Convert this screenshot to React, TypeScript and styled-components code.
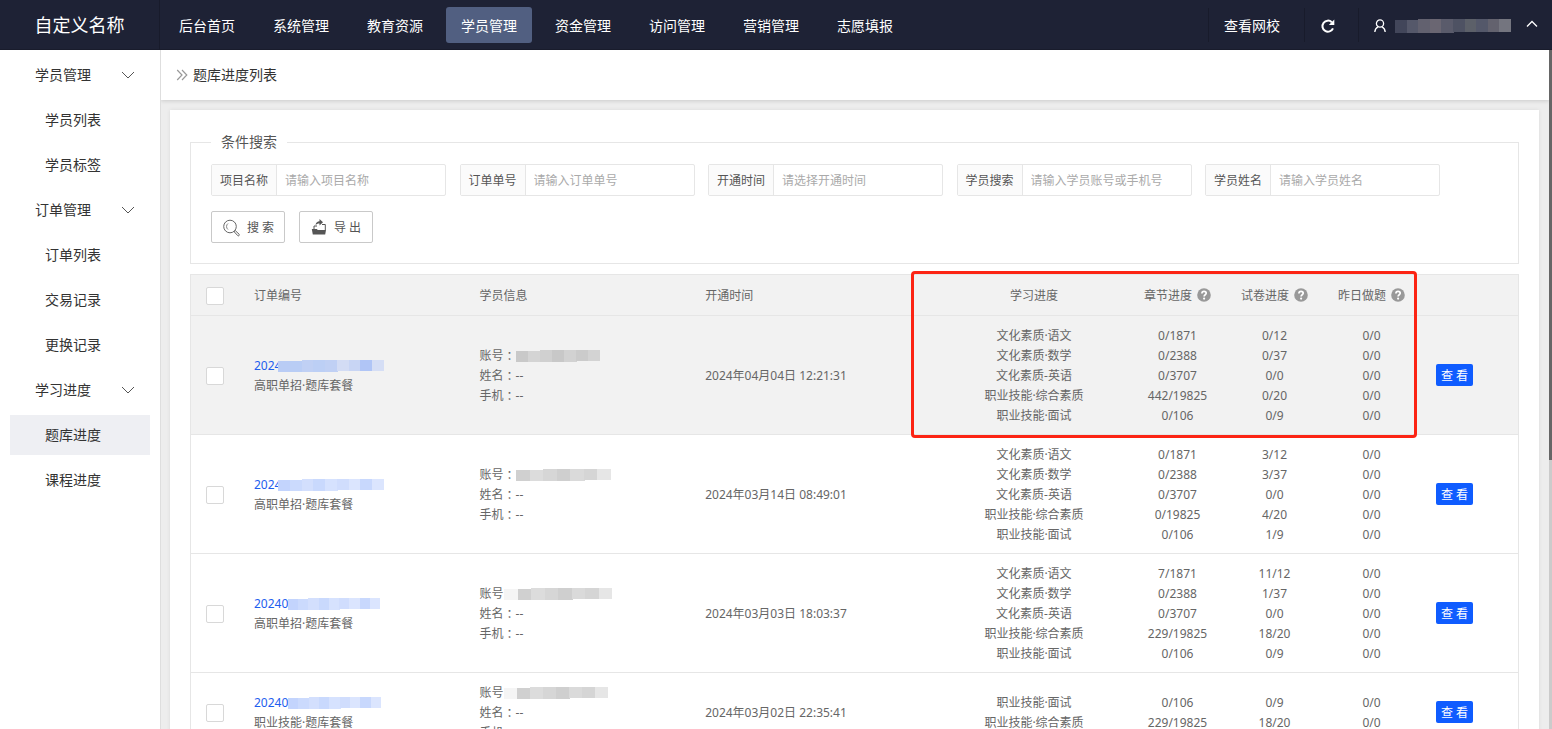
import React from "react";
import styled, { createGlobalStyle } from "styled-components";

const Global = createGlobalStyle`
  * { box-sizing: border-box; }
  html, body, #root { height: 100%; }
  body {
    margin: 0;
    background: #ededed;
    color: #333;
    font: 14px/20px "Noto Sans", "Noto Sans CJK SC", sans-serif;
  }
  a { color: inherit; text-decoration: none; }
  button, input { font: inherit; color: inherit; }
`;

const Page = styled.div`
  display: flex;
  flex-direction: column;
  height: 100vh;
  overflow: hidden;
`;

/* ---------- top bar ---------- */
const TopBar = styled.header`
  display: flex;
  flex: none;
  height: 50px;
  background: #1e2235;
  box-shadow: inset 0 -1px 0 #191c2c;
  color: #fff;
`;
const Brand = styled.a`
  width: 160px;
  flex: none;
  border-right: 1px solid #181b2b;
  font-size: 18px;
  line-height: 50px;
  text-align: center;
`;
const Nav = styled.nav`
  display: flex;
  flex: 1;
  align-items: center;
  gap: 8px;
  padding-left: 4px;
`;
const NavLink = styled.a<{ $active?: boolean }>`
  padding: 9px 15px 7px;
  border-radius: 3px;
  background: ${(p) => (p.$active ? "#515f81" : "transparent")};
`;
const Tools = styled.div`
  display: flex;
  align-items: center;
`;
const Tool = styled.button<{ $w: number }>`
  display: flex;
  align-items: center;
  gap: 9px;
  width: ${(p) => p.$w}px;
  height: 34px;
  padding: 2px 14px 0 15px;
  border: 0;
  border-left: 1px solid #181b2b;
  background: none;
  cursor: pointer;
  & > svg:nth-child(3) { margin-left: auto; }
`;

/* ---------- body ---------- */
const Body = styled.div`
  display: flex;
  flex: 1;
  min-height: 0;
`;
const Side = styled.aside`
  flex: none;
  width: 161px;
  background: #fff;
  border-right: 1px solid #dedede;
`;
const Group = styled.button`
  display: flex;
  align-items: center;
  justify-content: space-between;
  width: 100%;
  height: 50px;
  padding: 0 25px 0 35px;
  border: 0;
  background: none;
  cursor: pointer;
`;
const SubList = styled.ul`
  display: flex;
  flex-direction: column;
  gap: 5px;
  margin: 0;
  padding: 0 10px;
  list-style: none;
`;
const SubLink = styled.a<{ $active?: boolean }>`
  display: block;
  padding: 10px 35px;
  background: ${(p) => (p.$active ? "#eeeff3" : "transparent")};
`;
const Main = styled.main`
  flex: 1;
  min-width: 0;
  overflow: hidden;
`;
const Crumb = styled.div`
  display: flex;
  align-items: center;
  gap: 5px;
  height: 50px;
  padding-left: 15px;
  background: #fff;
  box-shadow: 0 1px 4px rgba(0, 0, 0, 0.15);
`;
const CrumbTitle = styled.h1`
  margin: 0;
  font-size: 14px;
  line-height: 20px;
  font-weight: 400;
`;
const Panel = styled.section`
  margin: 10px 10px 0 9px;
  padding: 20px;
  background: #fff;
  box-shadow: 0 0 4px rgba(0, 0, 0, 0.08);
`;
const Rail = styled.div`
  display: grid;
  grid-template-rows: 61fr 40fr;
  flex: none;
  width: 3px;
  background: #cbcbcb;
`;
const Thumb = styled.div`
  background: #666;
`;

/* ---------- search form ---------- */
const SearchBox = styled.fieldset`
  min-width: 0;
  margin: 0 0 10px;
  padding: 10px 20px 20px;
  border: 1px solid #e6e6e6;
`;
const Legend = styled.legend`
  padding: 0 10px;
  line-height: 24px;
  color: #555;
`;
const Fields = styled.div`
  display: flex;
  flex-wrap: wrap;
  justify-content: space-between;
  row-gap: 10px;
  max-width: 1229px;
  font-size: 12px;
  color: #555;
`;
const Field = styled.label`
  display: flex;
  width: 235px;
  height: 32px;
  border: 1px solid #e6e6e6;
  border-radius: 2px;
  line-height: 28px;
`;
const FieldName = styled.span`
  flex: none;
  width: 65px;
  padding: 2px 0 0 8px;
  background: #fbfbfb;
  border-right: 1px solid #e6e6e6;
`;
const TextBox = styled.input`
  flex: 1;
  min-width: 0;
  padding: 2px 8px 0;
  border: 0;
  outline: 0;
  background: none;
  &::placeholder { color: #aaa; opacity: 1; }
`;
const Actions = styled.div`
  display: flex;
  gap: 14px;
  margin-top: 15px;
`;
const ActionButton = styled.button`
  display: flex;
  align-items: center;
  gap: 7px;
  width: 74px;
  height: 32px;
  padding: 1px 0 0 11px;
  border: 1px solid #c9c9c9;
  border-radius: 2px;
  background: #fff;
  color: #555;
  font-size: 12px;
  white-space: pre;
  cursor: pointer;
`;

/* ---------- table ---------- */
const TableWrap = styled.div`
  position: relative;
  border: 1px solid #e6e6e6;
`;
const Table = styled.table`
  width: 100%;
  table-layout: fixed;
  border-collapse: separate;
  border-spacing: 0;
  color: #666;
  font-size: 12px;
`;
const Col = styled.col<{ $w?: string }>`
  width: ${(p) => p.$w ?? "auto"};
`;
const Th = styled.th<{ $center?: boolean }>`
  height: 41px;
  padding: 2px ${(p) => (p.$center ? "0" : "15px")} 0;
  background: #f2f2f2;
  border-bottom: 1px solid #e6e6e6;
  font-weight: 400;
  text-align: ${(p) => (p.$center ? "center" : "left")};
`;
const HeadLabel = styled.span`
  display: flex;
  align-items: center;
  justify-content: center;
  gap: 5px;
  & > svg { margin-bottom: 2px; }
`;
const Tr = styled.tr<{ $hover?: boolean }>`
  background: ${(p) => (p.$hover ? "#f2f2f2" : "#fff")};
`;
const Td = styled.td<{ $center?: boolean }>`
  padding: 10px ${(p) => (p.$center ? "0" : "15px")} 8px;
  border-bottom: 1px solid #e6e6e6;
  text-align: ${(p) => (p.$center ? "center" : "left")};
`;
const Line = styled.div`
  display: flex;
  align-items: center;
  height: 20px;
`;
const Cell = styled.div`
  height: 20px;
  white-space: nowrap;
`;
const OrderLink = styled.a`
  display: flex;
  align-items: center;
  height: 20px;
  color: #1e5eee;
`;
/* full-width colon drawn in the middle of its square */
const Colon = styled.span`
  font-family: "Noto Sans CJK TC", sans-serif;
`;
const Check = styled.input`
  appearance: none;
  display: block;
  width: 18px;
  height: 18px;
  margin: 0;
  border: 1px solid #d8d8d8;
  border-radius: 2px;
  background: #fff;
`;
const ViewButton = styled.button`
  display: block;
  height: 22px;
  margin: 0 1px 2px;
  padding: 1px 5px 0;
  border: 0;
  border-radius: 2px;
  background: #0f5cff;
  color: #fff;
  font-size: 12px;
  line-height: 20px;
  cursor: pointer;
`;
const Highlight = styled.div`
  position: absolute;
  top: -4px;
  right: 101px;
  width: 506px;
  height: 167px;
  border: 3px solid #fc2414;
  border-radius: 4px;
  pointer-events: none;
`;
const Patch = styled.svg<{ $shift?: number }>`
  flex: none;
  margin-left: ${(p) => p.$shift ?? 0}px;
  margin-bottom: 1px;
  position: relative;
`;

/* ---------- drawings ---------- */
const Mosaic = ({ cells, w, h = 12, shift = 0 }: { cells: string[]; w: number; h?: number; shift?: number }) => {
  const step = w / cells.length;
  return (
    <Patch $shift={shift} width={w} height={h} shapeRendering="crispEdges" aria-hidden="true">
      {cells.map((c, i) => (
        <rect key={i} x={i * step} y={i < 2 ? 1 : 0} width={step + 1} height={h - (i > 4 ? 1 : 0)} fill={c} />
      ))}
    </Patch>
  );
};
const Chevron = () => (
  <svg width="14" height="8" viewBox="0 0 14 8" fill="none" stroke="#555" aria-hidden="true">
    <path d="M1 1l6 6 6-6" />
  </svg>
);
const DoubleRight = () => (
  <svg width="12" height="12" viewBox="0 0 12 12" fill="none" stroke="#999" strokeWidth="1.200" aria-hidden="true">
    <path d="M1.200 1L6 6l-4.800 5M6 1l4.800 5L6 11" />
  </svg>
);
const Reload = () => (
  <svg width="16" height="16" viewBox="0 0 16 16" fill="none" aria-hidden="true">
    <path d="M13 10.300A5.500 5.500 0 1 1 11.800 4.200" stroke="#fff" strokeWidth="2" />
    <path d="M14.300 1.500v5.500H8.800z" fill="#fff" />
  </svg>
);
const User = () => (
  <svg width="12" height="14" viewBox="0 0 12 14" fill="none" stroke="#fff" strokeWidth="1.300" aria-hidden="true">
    <circle cx="6" cy="4.500" r="3.600" />
    <path d="M.8 13c.2-2.700 1.400-4.300 3.200-5.200M11.200 13c-.2-2.700-1.400-4.300-3.200-5.200" />
  </svg>
);
const Up = () => (
  <svg width="12" height="12" viewBox="0 0 12 12" fill="none" stroke="#fff" strokeWidth="1.300" aria-hidden="true">
    <path d="M1 6.500l5-5 5 5" />
  </svg>
);
const Magnifier = () => (
  <svg width="17" height="18" viewBox="0 0 17 18" fill="none" stroke="#666" aria-hidden="true">
    <circle cx="7" cy="7.500" r="6.300" />
    <path d="M5 4.500a3.800 3.800 0 0 0 0 6" strokeWidth=".8" />
    <path d="M11.200 12.800l1.200-1.100 3.800 3.600c.6 1-.6 2-1.400 1.400z" />
  </svg>
);
const Export = () => (
  <svg width="16" height="18" viewBox="0 0 16 18" aria-hidden="true">
    <path d="M.8 10h5l1 1h8.200l-.8 4.500H1.800z" fill="#555" />
    <path d="M3 10V7H6M11 5.500h3.300V11" fill="none" stroke="#555" />
    <path d="M4.500 6C5 3.300 6.500 2.200 8.500 2.200V0L12 3.300 8.500 6.500V4.400C6.800 4.300 5.500 5 4.500 6z" fill="#555" />
  </svg>
);
const Help = () => (
  <svg width="14" height="14" viewBox="0 0 14 14" fill="none" aria-hidden="true">
    <circle cx="7" cy="7" r="6.800" fill="#999" />
    <path d="M4.900 5.500c0-2.800 4.300-2.600 4.300-.2 0 1.500-2.100 1.500-2.100 3.200" stroke="#fff" strokeWidth="1.700" />
    <circle cx="7.100" cy="10.600" r="1.100" fill="#fff" />
  </svg>
);

/* ---------- data ---------- */
const NAV = ["后台首页", "系统管理", "教育资源", "学员管理", "资金管理", "访问管理", "营销管理", "志愿填报"];
const SIDE = [
  { title: "学员管理", items: ["学员列表", "学员标签"] },
  { title: "订单管理", items: ["订单列表", "交易记录", "更换记录"] },
  { title: "学习进度", items: ["题库进度", "课程进度"] },
];
const FIELDS = [
  ["项目名称", "请输入项目名称"],
  ["订单单号", "请输入订单单号"],
  ["开通时间", "请选择开通时间"],
  ["学员搜索", "请输入学员账号或手机号"],
  ["学员姓名", "请输入学员姓名"],
];
const SUBJECTS = ["文化素质·语文", "文化素质·数学", "文化素质-英语", "职业技能·综合素质", "职业技能·面试"];
const BLUES = ["#b9ccf5", "#b9cdf5", "#c0d0f4", "#bccff5", "#c0d0f4", "#d3dcf4", "#c8d5f4", "#b0c5f6", "#d5def5"];
const LIGHT_BLUES = ["#c3d4fd", "#cbdafd", "#d3dffd", "#c9d9fd", "#d6e2fe", "#d0ddfd", "#dbe5fe", "#c8d8fd", "#dbe5fe"];
const GREYS = ["#c9c9c9", "#d4d4d4", "#d0d0d0", "#c8c8c8", "#d2d2d2", "#cbcbcb", "#d3d3d3"];
const LIGHT_GREYS = ["#d0d0d0", "#dcdcdc", "#d6d6d6", "#cfcfcf", "#dadada", "#d5d5d5", "#e6e6e6"];
const FADED_GREYS = ["#f5f5f5", ...LIGHT_GREYS];
const USER_CELLS = ["#42465a", "#55586a", "#62616f", "#6a6672", "#5a5b6b", "#4e5263", "#5c6069", "#54586a", "#63626e", "#74757f"];

type Row = {
  id: string;
  idW: number;
  idShift: number;
  pkg: string;
  accountW: number;
  noColon?: boolean;
  time: string;
  subjects: string[];
  chapter: string[];
  exam: string[];
};
const ROWS: Row[] = [
  {
    id: "2024", idW: 106, idShift: -3, pkg: "高职单招·题库套餐", accountW: 84, time: "2024年04月04日 12:21:31", subjects: SUBJECTS,
    chapter: ["0/1871", "0/2388", "0/3707", "442/19825", "0/106"], exam: ["0/12", "0/37", "0/0", "0/20", "0/9"],
  },
  {
    id: "2024", idW: 106, idShift: -3, pkg: "高职单招·题库套餐", accountW: 95, time: "2024年03月14日 08:49:01", subjects: SUBJECTS,
    chapter: ["0/1871", "0/2388", "0/3707", "0/19825", "0/106"], exam: ["3/12", "3/37", "0/0", "4/20", "1/9"],
  },
  {
    id: "20240", idW: 92, idShift: 0, pkg: "高职单招·题库套餐", accountW: 108, noColon: true, time: "2024年03月03日 18:03:37", subjects: SUBJECTS,
    chapter: ["7/1871", "0/2388", "0/3707", "229/19825", "0/106"], exam: ["11/12", "1/37", "0/0", "18/20", "0/9"],
  },
  {
    id: "20240", idW: 93, idShift: 0, pkg: "职业技能·题库套餐", accountW: 104, noColon: true, time: "2024年03月02日 22:35:41", subjects: [SUBJECTS[4], SUBJECTS[3]],
    chapter: ["0/106", "229/19825"], exam: ["0/9", "18/20"],
  },
];

const Stack = ({ items }: { items: string[] }) => (
  <>
    {items.map((t, i) => (
      <Cell key={i}>{t}</Cell>
    ))}
  </>
);

export default function App() {
  return (
    <Page>
      <Global />
      <TopBar>
        <Brand href="#">自定义名称</Brand>
        <Nav>
          {NAV.map((n) => (
            <NavLink key={n} href="#" $active={n === "学员管理"}>{n}</NavLink>
          ))}
        </Nav>
        <Tools>
          <Tool $w={96}>查看网校</Tool>
          <Tool $w={54} aria-label="刷新"><Reload /></Tool>
          <Tool $w={194} aria-label="账号">
            <User />
            <Mosaic cells={USER_CELLS} w={116} h={14} />
            <Up />
          </Tool>
        </Tools>
      </TopBar>
      <Body>
        <Side>
          {SIDE.map((g) => (
            <React.Fragment key={g.title}>
              <Group>{g.title}<Chevron /></Group>
              <SubList>
                {g.items.map((s) => (
                  <li key={s}><SubLink href="#" $active={s === "题库进度"}>{s}</SubLink></li>
                ))}
              </SubList>
            </React.Fragment>
          ))}
        </Side>
        <Main>
          <Crumb>
            <DoubleRight />
            <CrumbTitle>题库进度列表</CrumbTitle>
          </Crumb>
          <Panel>
            <SearchBox>
              <Legend>条件搜索</Legend>
              <Fields>
                {FIELDS.map(([name, hint]) => (
                  <Field key={name}>
                    <FieldName>{name}</FieldName>
                    <TextBox type="text" placeholder={hint} />
                  </Field>
                ))}
              </Fields>
              <Actions>
                <ActionButton type="button"><Magnifier />搜 索</ActionButton>
                <ActionButton type="button"><Export />导 出</ActionButton>
              </Actions>
            </SearchBox>
            <TableWrap>
              <Table>
                <colgroup>
                  <Col $w="48px" />
                  <Col $w="17%" />
                  <Col $w="17%" />
                  <Col />
                  <Col $w="190px" />
                  <Col $w="97px" />
                  <Col $w="97px" />
                  <Col $w="97px" />
                  <Col $w="98px" />
                </colgroup>
                <thead>
                  <tr>
                    <Th><Check type="checkbox" aria-label="全选" /></Th>
                    <Th>订单编号</Th>
                    <Th>学员信息</Th>
                    <Th>开通时间</Th>
                    <Th $center>学习进度</Th>
                    <Th $center><HeadLabel>章节进度<Help /></HeadLabel></Th>
                    <Th $center><HeadLabel>试卷进度<Help /></HeadLabel></Th>
                    <Th $center><HeadLabel>昨日做题<Help /></HeadLabel></Th>
                    <Th />
                  </tr>
                </thead>
                <tbody>
                  {ROWS.map((r, i) => (
                    <Tr key={r.time} $hover={i === 0}>
                      <Td><Check type="checkbox" aria-label={"选择 " + r.time} /></Td>
                      <Td>
                        <OrderLink href="#">{r.id}<Mosaic cells={i ? LIGHT_BLUES : BLUES} w={r.idW} shift={r.idShift} /></OrderLink>
                        <Line>{r.pkg}</Line>
                      </Td>
                      <Td>
                        <Line>
                          账号{!r.noColon && <Colon>：</Colon>}
                          <Mosaic cells={r.noColon ? FADED_GREYS : i ? LIGHT_GREYS : GREYS} w={r.accountW} />
                        </Line>
                        <Line>姓名<Colon>：</Colon>--</Line>
                        <Line>手机<Colon>：</Colon>--</Line>
                      </Td>
                      <Td>{r.time}</Td>
                      <Td $center><Stack items={r.subjects} /></Td>
                      <Td $center><Stack items={r.chapter} /></Td>
                      <Td $center><Stack items={r.exam} /></Td>
                      <Td $center><Stack items={r.subjects.map(() => "0/0")} /></Td>
                      <Td><ViewButton type="button">查 看</ViewButton></Td>
                    </Tr>
                  ))}
                </tbody>
              </Table>
              <Highlight />
            </TableWrap>
          </Panel>
        </Main>
        <Rail><Thumb /></Rail>
      </Body>
    </Page>
  );
}
